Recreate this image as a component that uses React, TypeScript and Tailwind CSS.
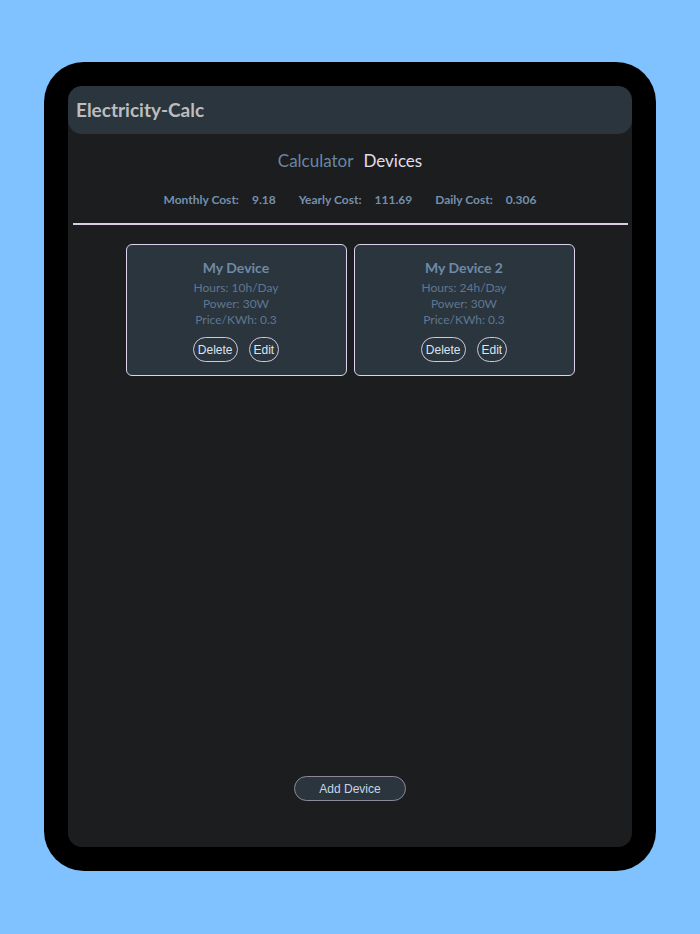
const devices = [
  { name: 'My Device', hours: '10h/Day', power: '30W', price: '0.3' },
  { name: 'My Device 2', hours: '24h/Day', power: '30W', price: '0.3' },
]

const stats = [
  { label: 'Monthly Cost:', value: '9.18' },
  { label: 'Yearly Cost:', value: '111.69' },
  { label: 'Daily Cost:', value: '0.306' },
]

function DeviceCard({ device }: { device: (typeof devices)[number] }) {
  return (
    <div className="w-[221px] h-[132px] flex flex-col items-center bg-[#2b353e] border border-[#ddd3ea] rounded-[6px] pt-[13px]">
      <h3 className="text-[14px] leading-[20px] font-bold text-[#6e8aa6]">{device.name}</h3>
      <div className="flex flex-col items-center text-[12px] leading-[16px] text-[#5e7791] mt-[2px]">
        <p>Hours: {device.hours}</p>
        <p>Power: {device.power}</p>
        <p>Price/KWh: {device.price}</p>
      </div>
      <div className="flex gap-[11px] mt-[9px] font-['Liberation_Sans',Arial,sans-serif]">
        <button className="h-[25px] px-[4px] rounded-full border border-[#cfc8dc] text-[12px] text-[#dce4f2]">Delete</button>
        <button className="h-[25px] px-[4px] rounded-full border border-[#cfc8dc] text-[12px] text-[#dce4f2]">Edit</button>
      </div>
    </div>
  )
}

export default function App() {
  return (
    <div className="w-[700px] h-[934px] bg-[#80c1ff] pt-[62px] pb-[63px] px-[44px] flex font-['Lato','Noto_Sans',sans-serif]">
      <div className="flex-1 flex bg-black rounded-[40px] p-6">
        <div className="flex-1 flex flex-col bg-[#1c1d1f] rounded-[14px] overflow-hidden">
          {/* Header */}
          <div className="h-[48px] flex items-center px-2 bg-[#2b353e] rounded-[14px]">
            <h1 className="text-[19px] font-bold text-[#bdbdbd]">Electricity-Calc</h1>
          </div>

          {/* Tabs */}
          <div className="flex justify-center gap-[10px] mt-[15px] text-[17px] leading-[24px]">
            <span className="text-[#6a86a2]">Calculator</span>
            <span className="text-[#e2deeb]">Devices</span>
          </div>

          {/* Cost summary */}
          <div className="flex justify-center gap-[23px] mt-[19px] text-[12px] leading-[16px] font-bold text-[#7490ab]">
            {stats.map((s) => (
              <div key={s.label} className="flex gap-[13px]">
                <span>{s.label}</span>
                <span>{s.value}</span>
              </div>
            ))}
          </div>

          <div className="h-[2px] bg-[#d9cde2] mt-[15px] ml-[5px] mr-[4px]" />

          {/* Device cards */}
          <div className="flex justify-center gap-[7px] mt-[19px]">
            {devices.map((d) => (
              <DeviceCard key={d.name} device={d} />
            ))}
          </div>

          <div className="flex-1" />

          <div className="flex justify-center pb-[46px]">
            <button className="w-[112px] h-[25px] rounded-full bg-[#2b353e] border border-[#8c8a99] text-[12px] text-[#c9d5e5] font-['Liberation_Sans',Arial,sans-serif]">
              Add Device
            </button>
          </div>
        </div>
      </div>
    </div>
  )
}
